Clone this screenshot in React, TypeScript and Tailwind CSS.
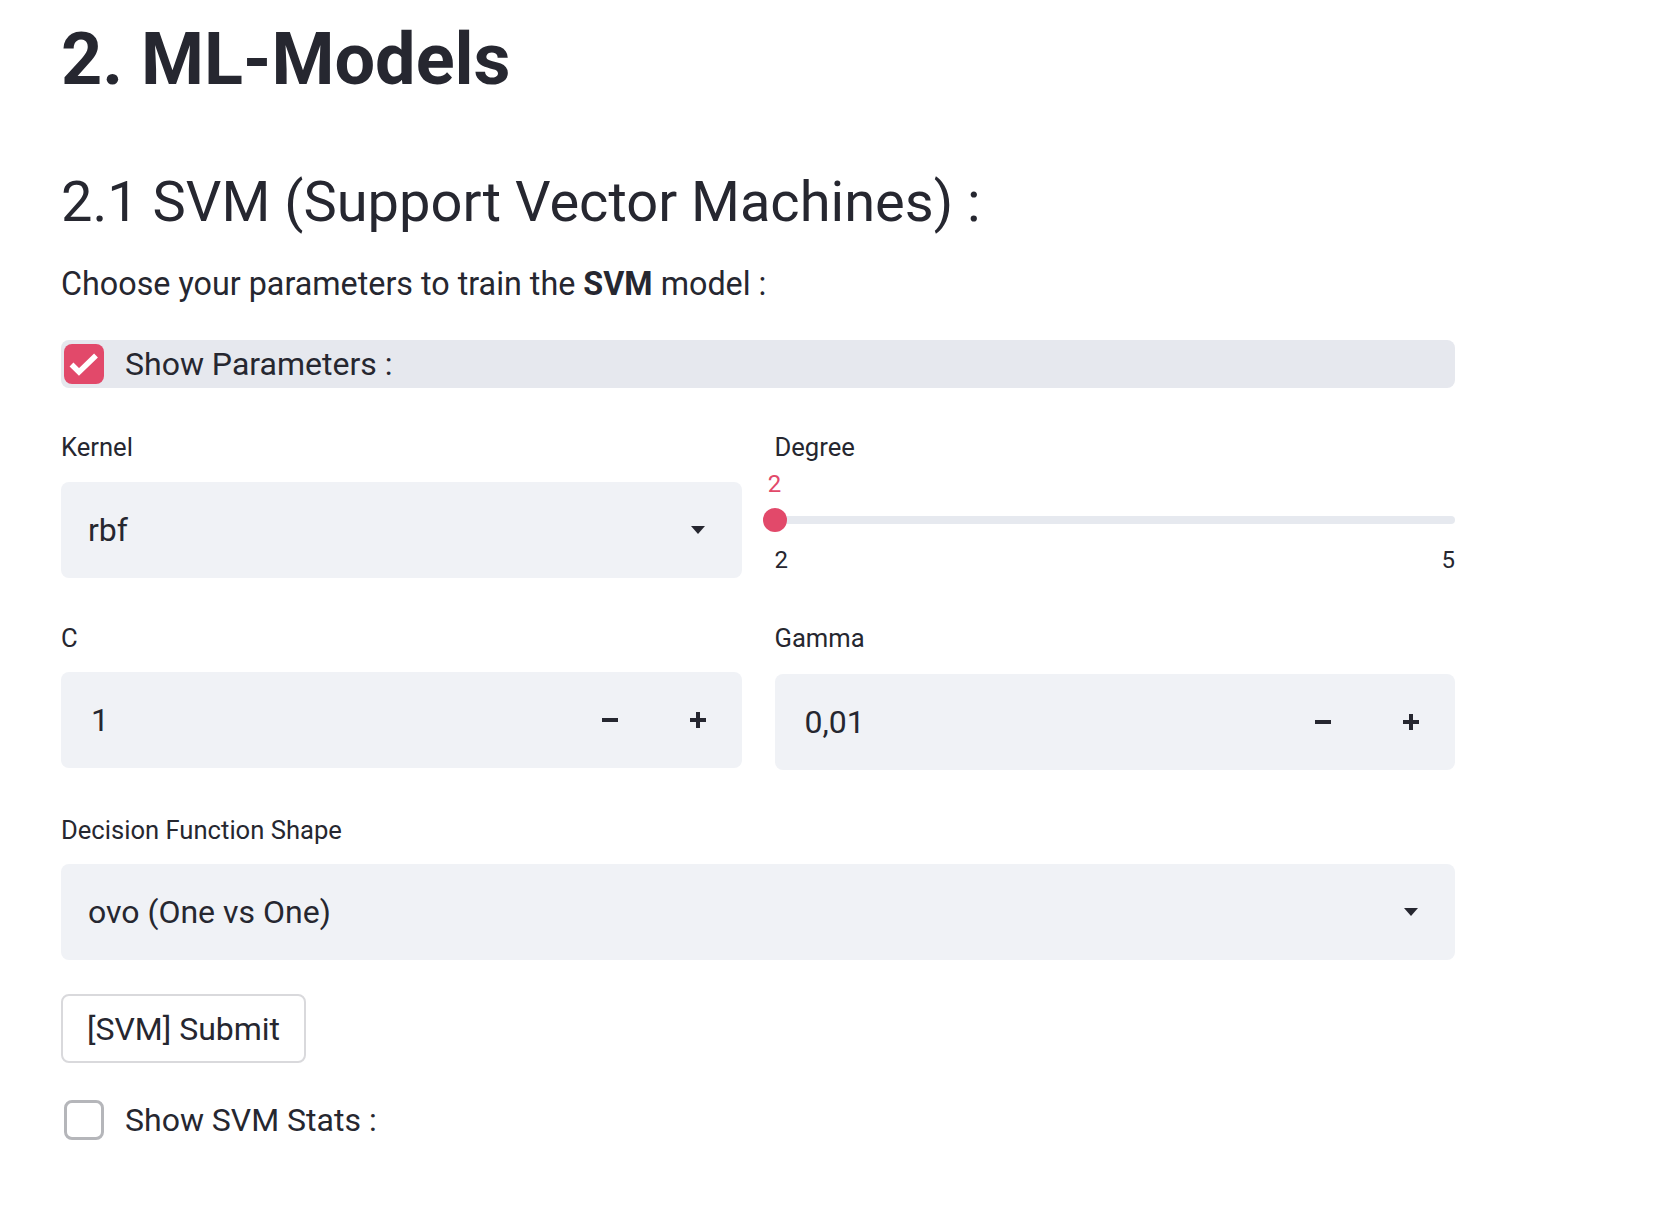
import React from "react";

function Caret() {
  return (
    <svg width="14" height="8" viewBox="0 0 14 8" className="shrink-0">
      <polygon points="0,0 14,0 7,8" fill="#262730" />
    </svg>
  );
}

function Minus() {
  return (
    <svg width="16" height="16" viewBox="0 0 16 16">
      <rect x="0" y="6" width="16" height="4" fill="#262730" />
    </svg>
  );
}

function Plus() {
  return (
    <svg width="16" height="16" viewBox="0 0 16 16">
      <rect x="0" y="6" width="16" height="4" fill="#262730" />
      <rect x="6" y="0" width="4" height="16" fill="#262730" />
    </svg>
  );
}

function Label({ children }: { children: React.ReactNode }) {
  return <div className="text-[25.6px] leading-[36px] text-[#262730]">{children}</div>;
}

function SelectBox({ value }: { value: string }) {
  return (
    <div className="flex h-[96px] items-center justify-between rounded-[8px] bg-[#f0f2f6] pl-[27px] pr-[37px]">
      <span className="text-[32px] leading-[40px] text-[#262730]">{value}</span>
      <Caret />
    </div>
  );
}

function NumberBox({ value }: { value: string }) {
  return (
    <div className="flex h-[96px] items-center rounded-[8px] bg-[#f0f2f6] pl-[30px]">
      <span className="flex-1 text-[32px] leading-[40px] text-[#262730]">{value}</span>
      <div className="flex h-full w-[88px] items-center justify-center">
        <Minus />
      </div>
      <div className="flex h-full w-[88px] items-center justify-center">
        <Plus />
      </div>
    </div>
  );
}

export default function App() {
  return (
    <div className="min-h-screen bg-white font-['Roboto','Liberation_Sans',sans-serif] text-[#262730]">
      <div className="ml-[61px] w-[1394px] pt-[16px]">
        <h1 className="text-[72px] font-bold leading-[88px] text-[#262730]">2. ML-Models</h1>
        <h2 className="mt-[62px] text-[56px] font-normal leading-[72px] text-[#262730]">
          2.1 SVM (Support Vector Machines) :
        </h2>
        <p className="mt-[24px] text-[32.3px] leading-[44px]">
          Choose your parameters to train the <b className="font-bold">SVM</b> model :
        </p>

        <div className="mt-[34px] flex h-[48px] items-center rounded-[8px] bg-[#e6e8ee] pl-[3px]">
          <div className="flex h-[40px] w-[40px] items-center justify-center rounded-[8px] bg-[#e2496a]">
            <svg width="40" height="40" viewBox="0 0 40 40">
              <path d="M7.5 20.5 L15 28 L32 11.5" fill="none" stroke="white" strokeWidth="5.5" />
            </svg>
          </div>
          <span className="ml-[21px] text-[32px] leading-[40px]">Show Parameters :</span>
        </div>

        <div className="mt-[41px] grid grid-cols-2 gap-x-[33px]">
          <div>
            <Label>Kernel</Label>
            <div className="mt-[17px]">
              <SelectBox value="rbf" />
            </div>
          </div>
          <div>
            <Label>Degree</Label>
            <div className="relative">
              <div className="mt-[5px] h-[28px] w-[24px] -translate-x-[12px] text-center text-[24px] leading-[28px] text-[#e2496a]">
                2
              </div>
              <div className="relative mt-[10px] flex h-[24px] items-center">
                <div className="h-[8px] w-full rounded-full bg-[#e6e9ef]" />
                <div className="absolute left-[-12px] top-0 h-[24px] w-[24px] rounded-full bg-[#e2496a]" />
              </div>
              <div className="mt-[14px] flex justify-between text-[24px] leading-[28px] text-[#262730]">
                <span>2</span>
                <span>5</span>
              </div>
            </div>
          </div>
        </div>

        <div className="mt-[42px] grid grid-cols-2 gap-x-[33px]">
          <div>
            <Label>C</Label>
            <div className="mt-[16px]">
              <NumberBox value="1" />
            </div>
          </div>
          <div>
            <Label>Gamma</Label>
            <div className="mt-[18px]">
              <NumberBox value="0,01" />
            </div>
          </div>
        </div>

        <div className="mt-[42px]">
          <Label>Decision Function Shape</Label>
          <div className="mt-[16px]">
            <SelectBox value="ovo (One vs One)" />
          </div>
        </div>

        <button className="mt-[34px] flex h-[69px] w-[245px] items-center justify-center rounded-[8px] border-2 border-[#d9d9dc] bg-white text-[32px] leading-[40px] text-[#262730]">
          [SVM] Submit
        </button>

        <div className="mt-[37px] flex h-[40px] items-center pl-[3px]">
          <div className="h-[40px] w-[40px] rounded-[8px] border-[3px] border-[#b5b6ba] bg-white" />
          <span className="ml-[21px] text-[32px] leading-[40px]">Show SVM Stats :</span>
        </div>
      </div>
    </div>
  );
}
